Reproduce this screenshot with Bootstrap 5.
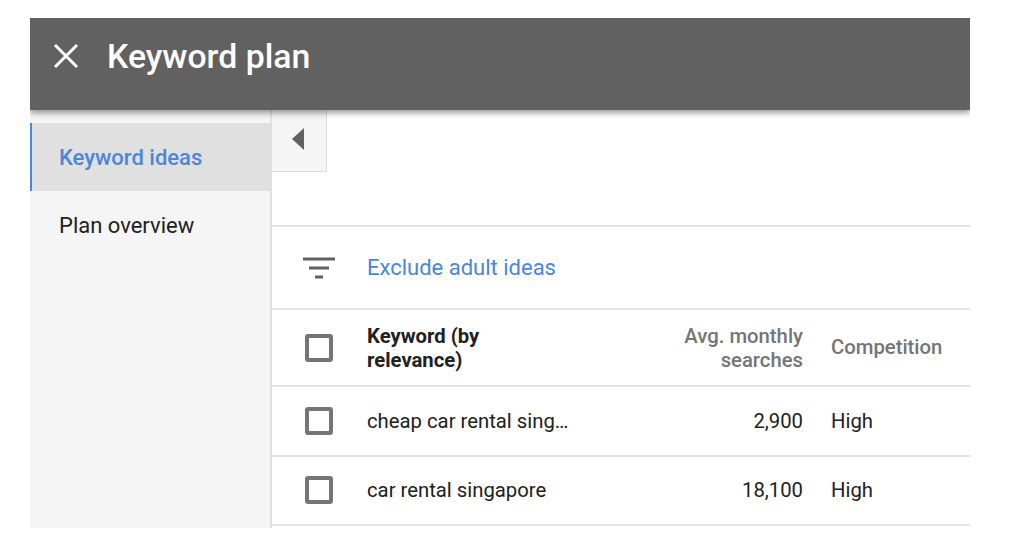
<!doctype html>
<html><head><meta charset="utf-8"><title>Keyword plan</title>
<link href="https://cdn.jsdelivr.net/npm/bootstrap@5.3.0/dist/css/bootstrap.min.css" rel="stylesheet">
<style>
html,body{background:#fff;margin:0;height:552px;overflow:hidden}
body{font-family:Roboto,"Liberation Sans",sans-serif;color:#212121}
.frame{margin:18px 0 0 30px;width:940px;height:510px;overflow:hidden}
.topbar{height:92px;background:#616161;color:#fff;padding-left:23px;gap:28px;position:relative;z-index:2;box-shadow:0 3px 6px rgba(0,0,0,.4);padding-bottom:17px}
.topbar h1{font-size:33.8px;font-weight:500;margin:0;padding-top:3px}
.body-row{height:418px}
.side{width:242px;flex:none;background:#f5f5f5;border-right:2px solid #e0e0e0;padding-top:13px}
.side-item{height:68px;padding-left:29px;font-size:22px;color:#212121;text-decoration:none}
.side-item.on{background:#e0e0e0;color:#4a86dc;font-weight:500;border-left:2px solid #4a86dc;padding-left:27px}
.toggle{width:55px;height:62px;background:#f5f5f5;border:solid #dcdcdc;border-width:0 1px 1px 0;padding-bottom:4px;padding-right:2px}
.spacer{height:55px;border-bottom:2px solid #e3e3e3}
.rowline{border-bottom:2px solid #e3e3e3;font-size:20.3px}
.filter{height:83px}
.head{height:77px}
.data{height:69.5px}
.check-cell{width:95px;flex:none;padding-left:33px}
.filter-cell{padding-left:31px}
.box{width:28px;height:28px;border:4px solid #757575;border-radius:3px;display:block}
.kw{width:220px;flex:none;line-height:24px}
.kw-head{width:190px;font-weight:700}
.num{width:216px;flex:none;text-align:right;line-height:24px}
.num-head{width:246px;padding-left:120px}
.comp{padding-left:28px}
.muted{color:#757575;font-weight:500}
.filter-link{color:#4a86dc;text-decoration:none;font-size:22px}
</style></head><body>
<div class="frame d-flex flex-column">
  <header class="topbar d-flex align-items-center">
    <svg width="26" height="26" viewBox="0 0 26 26" aria-hidden="true"><path d="M2 2 24 24M24 2 2 24" stroke="#fff" stroke-width="3"/></svg>
    <h1>Keyword plan</h1>
  </header>
  <div class="body-row d-flex">
    <nav class="side">
      <a class="side-item on d-flex align-items-center" href="#">Keyword ideas</a>
      <a class="side-item d-flex align-items-center" href="#">Plan overview</a>
    </nav>
    <main class="flex-grow-1">
      <div class="toggle d-flex align-items-center justify-content-center">
        <svg width="14" height="24" viewBox="0 0 14 24" aria-hidden="true"><path d="M13 1V23L1 12Z" fill="#616161"/></svg>
      </div>
      <div class="spacer"></div>
      <div class="rowline filter d-flex align-items-center">
        <div class="check-cell filter-cell d-flex">
          <svg width="32" height="22" viewBox="0 0 32 22" aria-hidden="true"><path d="M0 2H32M6 11H26M12 20H20" stroke="#616161" stroke-width="3"/></svg>
        </div>
        <a class="filter-link" href="#">Exclude adult ideas</a>
      </div>
      <div class="rowline head d-flex align-items-center">
        <div class="check-cell"><span class="box"></span></div>
        <div class="kw kw-head">Keyword (by relevance)</div>
        <div class="num num-head muted">Avg. monthly searches</div>
        <div class="comp muted">Competition</div>
      </div>
      <div class="rowline data d-flex align-items-center">
        <div class="check-cell"><span class="box"></span></div>
        <div class="kw">cheap car rental sing…</div>
        <div class="num">2,900</div>
        <div class="comp">High</div>
      </div>
      <div class="rowline data d-flex align-items-center">
        <div class="check-cell"><span class="box"></span></div>
        <div class="kw">car rental singapore</div>
        <div class="num">18,100</div>
        <div class="comp">High</div>
      </div>
    </main>
  </div>
</div>
</body></html>
